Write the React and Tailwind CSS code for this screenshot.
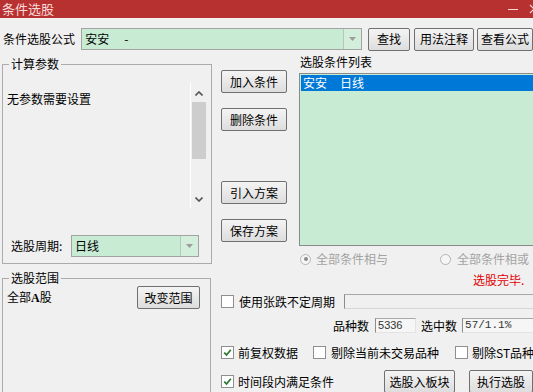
import React from 'react'

const Btn = ({ children, className = '' }) => (
  <button
    className={`h-[23px] shrink-0 border border-[#707070] rounded-[2px] bg-linear-to-b from-[#f4f4f4] to-[#dddddd] text-[12px] leading-none text-black ${className}`}
  >
    {children}
  </button>
)

const Arrow = () => (
  <svg width="7" height="4" viewBox="0 0 7 4">
    <path d="M0 0 L7 0 L3.5 4 Z" fill="#9c9c9c" />
  </svg>
)

const Combo = ({ children, className = '' }) => (
  <div className={`h-[22px] flex border border-[#a3a3a3] bg-[#c8ecd3] ${className}`}>
    <div className="flex-1 flex items-center pl-[3px]">{children}</div>
    <div className="w-[18px] flex items-center justify-center border-l border-[#b5c9bb] bg-[#d4eedc]">
      <Arrow />
    </div>
  </div>
)

const Check = ({ checked }) => (
  <span className="w-[13px] h-[13px] shrink-0 border border-[#8f8f8f] bg-white flex items-center justify-center">
    {checked && (
      <svg width="9" height="9" viewBox="0 0 9 9">
        <path d="M1.2 4.6 L3.6 7 L7.8 1.8" stroke="#2f7a35" strokeWidth="1.8" fill="none" />
      </svg>
    )}
  </span>
)

const Radio = ({ checked }) => (
  <span className="w-[11px] h-[11px] shrink-0 rounded-full border border-[#b4b4b4] bg-[#f6f6f6] flex items-center justify-center">
    {checked && <span className="w-[4px] h-[4px] rounded-full bg-[#8a8a8a]" />}
  </span>
)

export default function App() {
  return (
    <div className="w-[533px] h-[392px] overflow-hidden bg-[#f0f0f0] text-[12px] leading-[14px] text-black font-['Noto_Sans_CJK_SC',sans-serif]">
      {/* Title bar */}
      <div className="h-[18px] bg-[#b73131] flex items-center justify-between text-[#f7d9d9] text-[13px] overflow-hidden">
        <span className="pl-[2px]">条件选股</span>
        <div className="flex items-center">
          <span className="w-[10px] h-[1px] bg-[#f7d9d9] mr-[11px]" />
          <svg className="mr-[-6px] shrink-0" width="10" height="10" viewBox="0 0 10 10">
            <path d="M1 1 L9 9 M9 1 L1 9" stroke="#f7d9d9" strokeWidth="1.2" />
          </svg>
        </div>
      </div>

      {/* Formula row */}
      <div className="mt-[10px] h-[22px] flex items-center">
        <span className="w-[82px] pl-[3px]">条件选股公式</span>
        <Combo className="w-[283px]">
          <span>安安</span>
          <span className="ml-[15px]">-</span>
        </Combo>
        <Btn className="ml-[6px] w-[42px]">查找</Btn>
        <Btn className="ml-[4px] w-[60px]">用法注释</Btn>
        <Btn className="ml-[3px] w-[56px]">查看公式</Btn>
      </div>

      {/* Main */}
      <div className="flex">
        {/* Left column */}
        <div className="w-[212px] pl-[2px] pt-[7px] shrink-0">
          <fieldset className="w-[210px] h-[207px] border border-[#ababab]">
            <legend className="ml-[6px] px-[2px] leading-[14px]">计算参数</legend>
            <div className="mt-[12px] flex h-[125px]">
              <div className="flex-1 pl-[4px] pt-[9px]">无参数需要设置</div>
              <div className="w-[17px] mr-[4px] border-l border-white bg-[#f0f0f0] flex flex-col items-center">
                <svg className="mt-[8px]" width="8" height="5" viewBox="0 0 8 5">
                  <path d="M0.5 4.5 L4 1 L7.5 4.5" stroke="#555" strokeWidth="1.6" fill="none" />
                </svg>
                <div className="mt-[6px] w-[14px] h-[57px] bg-[#cdcdcd]" />
                <svg className="mt-[38px]" width="8" height="5" viewBox="0 0 8 5">
                  <path d="M0.5 0.5 L4 4 L7.5 0.5" stroke="#555" strokeWidth="1.6" fill="none" />
                </svg>
              </div>
            </div>
            <div className="mt-[27px] h-[22px] flex items-center pl-[8px]">
              <span className="w-[60px]">选股周期:</span>
              <Combo className="w-[128px]">日线</Combo>
            </div>
          </fieldset>

          <fieldset className="mt-[7px] w-[209px] h-[130px] border border-[#ababab]">
            <legend className="ml-[6px] px-[2px] leading-[14px]">选股范围</legend>
            <div className="mt-[1px] flex items-center justify-between pl-[4px] pr-[10px]">
              <span>
                全部<span className="font-bold font-['Liberation_Serif',serif]">A</span>股
              </span>
              <Btn className="w-[63px]">改变范围</Btn>
            </div>
          </fieldset>
        </div>

        {/* Right column */}
        <div className="flex-1 pl-[9px]">
          <div className="flex">
            <div className="w-[66px] shrink-0 flex flex-col">
              <Btn className="mt-[20px] w-[66px]">加入条件</Btn>
              <Btn className="mt-[15px] w-[66px]">删除条件</Btn>
              <Btn className="mt-[50px] w-[66px]">引入方案</Btn>
              <Btn className="mt-[15px] w-[66px]">保存方案</Btn>
            </div>
            <div className="ml-[12px] flex-1 flex flex-col">
              <div className="mt-[5px] pl-[1px]">选股条件列表</div>
              <div className="mt-[4px] h-[173px] w-[240px] border border-[#8a8a8a] bg-[#c8ecd3] p-[1px]">
                <div className="h-[16px] bg-[#0078d7] text-white flex items-center pl-[2px]">
                  <span>安安</span>
                  <span className="ml-[13px]">日线</span>
                </div>
              </div>
              <div className="mt-[6px] h-[14px] flex items-center text-[#a3a3a3]">
                <span className="ml-[1px]"><Radio checked /></span>
                <span className="ml-[5px]">全部条件相与</span>
                <span className="ml-[52px]"><Radio /></span>
                <span className="ml-[6px] whitespace-nowrap">全部条件相或</span>
              </div>
              <div className="mt-[7px] pl-[174px] text-[#e00000]">选股完毕.</div>
            </div>
          </div>

          <div className="mt-[7px] h-[15px] flex items-center">
            <Check />
            <span className="ml-[5px] w-[96px] shrink-0">使用张跌不定周期</span>
            <div className="ml-[9px] flex-1 h-[15px] border border-[#d6d6d6] border-l-[#8c8c8c] border-t-[#a8a8a8]" />
          </div>

          <div className="mt-[9px] h-[15px] flex items-center">
            <span className="ml-[112px]">品种数</span>
            <div className="ml-[6px] w-[41px] h-[15px] border border-[#e3e3e3] border-l-[#8c8c8c] border-t-[#a8a8a8] bg-[#f6f6f6] text-[11px] leading-[13px] pl-[2px] font-['Liberation_Sans',sans-serif] text-[#333]">5336</div>
            <span className="ml-[5px]">选中数</span>
            <div className="ml-[5px] flex-1 h-[15px] border border-[#e3e3e3] border-l-[#8c8c8c] border-t-[#a8a8a8] bg-[#f6f6f6] text-[11px] leading-[13px] pl-[2px] font-['Liberation_Mono',monospace] text-[#333] whitespace-nowrap">57/1.1%</div>
          </div>

          <div className="mt-[12px] h-[15px] flex items-center whitespace-nowrap">
            <Check checked />
            <span className="ml-[4px]">前复权数据</span>
            <span className="ml-[15px]"><Check /></span>
            <span className="ml-[5px]">剔除当前未交易品种</span>
            <span className="ml-[16px]"><Check /></span>
            <span className="ml-[4px]">剔除ST品种</span>
          </div>

          <div className="mt-[10px] h-[23px] flex items-center whitespace-nowrap">
            <Check checked />
            <span className="ml-[4px]">时间段内满足条件</span>
            <Btn className="ml-[50px] w-[71px]">选股入板块</Btn>
            <Btn className="ml-[14px] w-[64px]">执行选股</Btn>
          </div>
        </div>
      </div>
    </div>
  )
}
